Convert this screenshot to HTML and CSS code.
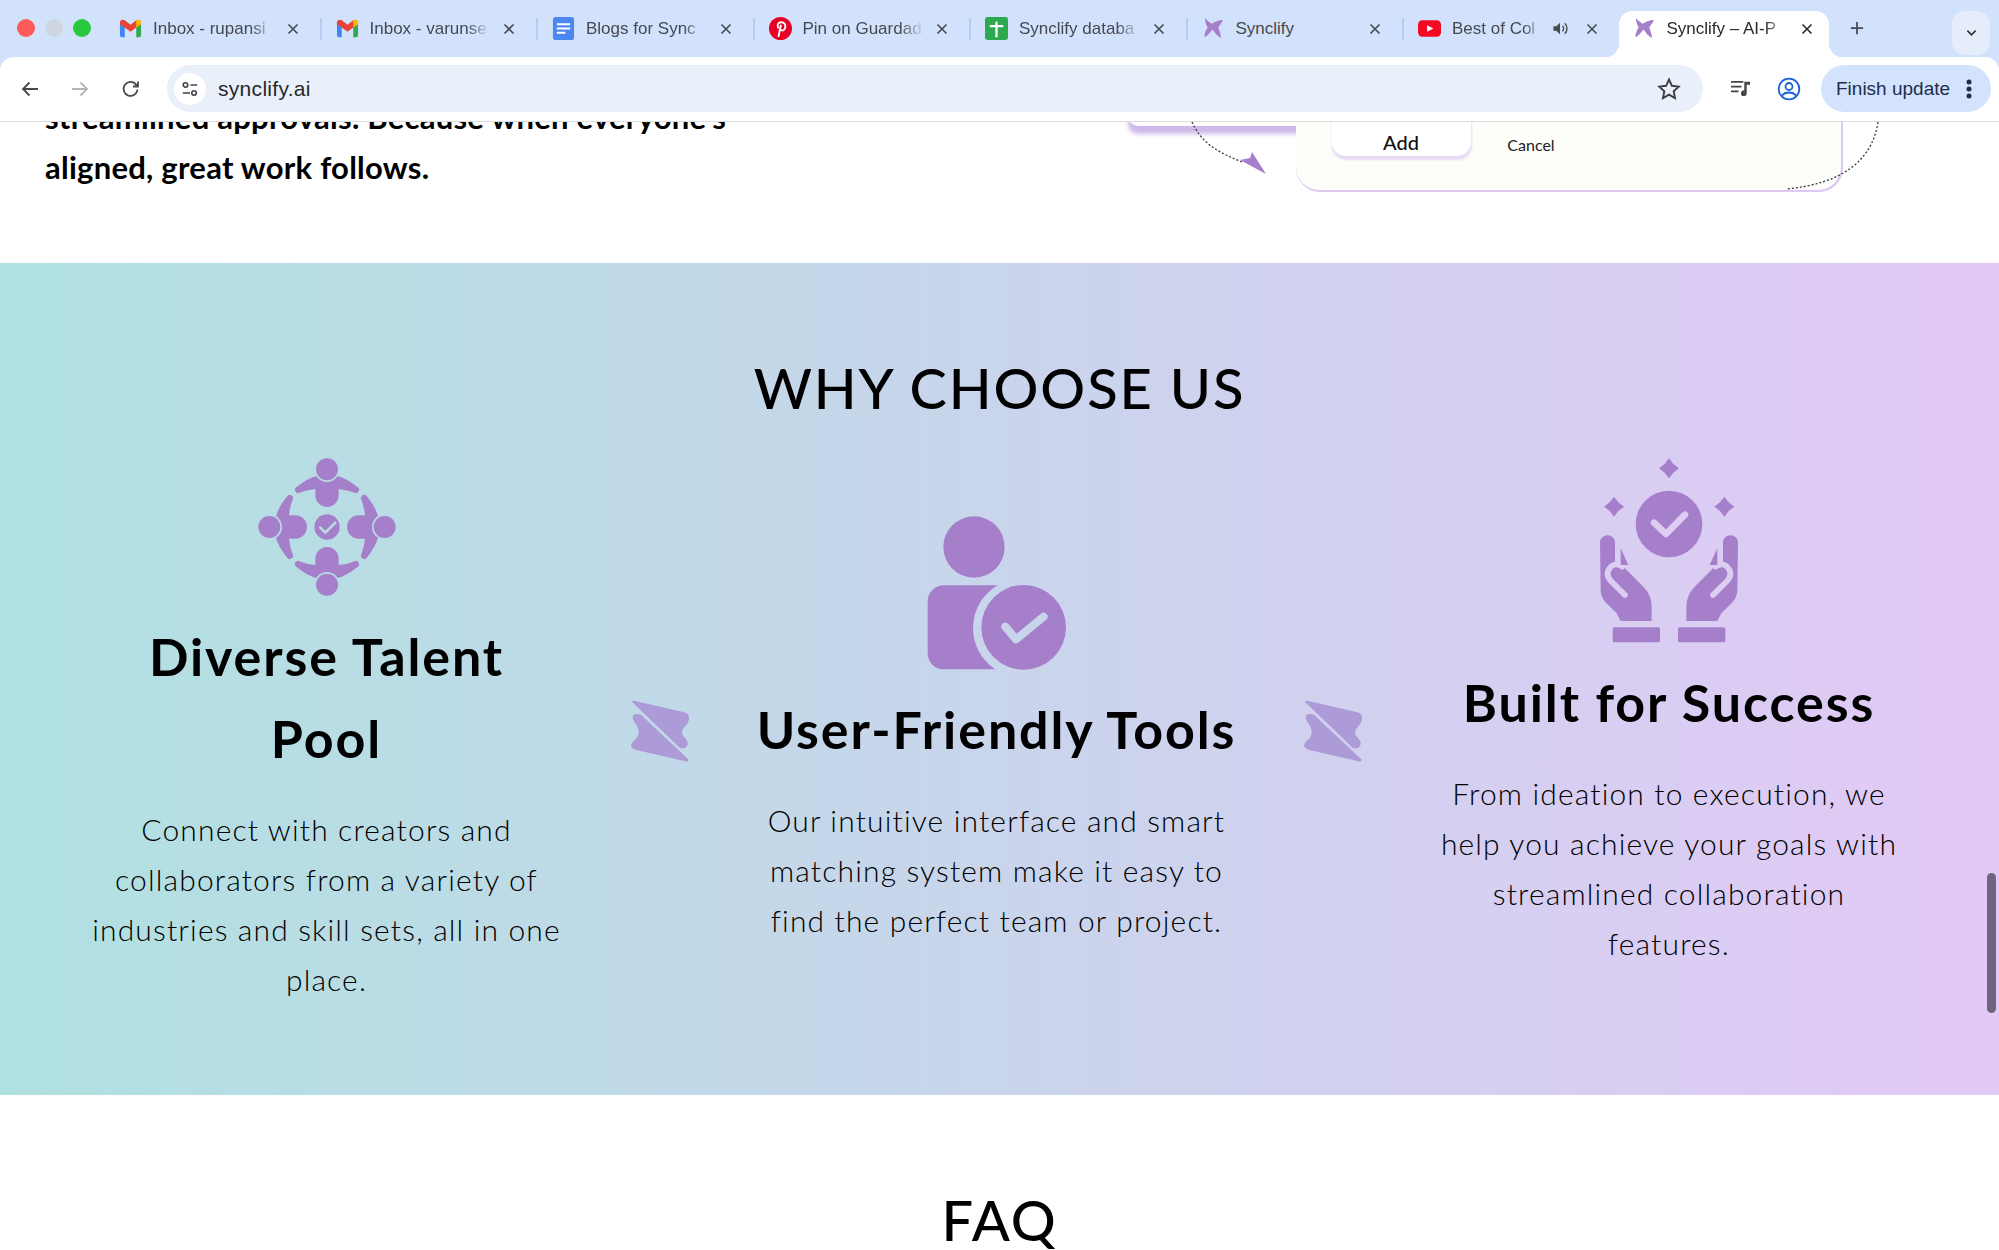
FILE: index.html
```html
<!DOCTYPE html>
<html lang="en">
<head>
<meta charset="utf-8">
<title>Synclify – AI-Powered Collaboration</title>
<link rel="stylesheet" href="styles.css">
</head>
<body>
<div class="app">
  <header class="browser">
    <div class="tabstrip">
      <div class="traffic"><i class="dot red"></i><i class="dot grey"></i><i class="dot green"></i></div>
      <div class="tab">
        <svg class="fav" viewBox="0 0 24 24"><path d="M1 21V6l5 3v12H3a2 2 0 0 1-2-2z" fill="#4285f4"/><path d="M23 21V6l-5 3v12h3a2 2 0 0 0 2-2z" fill="#34a853"/><path d="M1 7.500V5.500C1 3 4 2 6 3.500L12 8l6-4.500C20 2 23 3 23 5.500v2l-5 3.500-6 4.500L6 11z" fill="#ea4335"/><path d="M18 3.500C20 2 23 3 23 5.500v2l-5 3.500z" fill="#fbbc04"/></svg>
        <span class="title">Inbox - rupansi</span>
        <svg class="x" viewBox="0 0 12 12"><path d="M1.500 1.500l9 9M10.500 1.500l-9 9"/></svg>
      </div><i class="sep"></i>
      <div class="tab">
        <svg class="fav" viewBox="0 0 24 24"><path d="M1 21V6l5 3v12H3a2 2 0 0 1-2-2z" fill="#4285f4"/><path d="M23 21V6l-5 3v12h3a2 2 0 0 0 2-2z" fill="#34a853"/><path d="M1 7.500V5.500C1 3 4 2 6 3.500L12 8l6-4.500C20 2 23 3 23 5.500v2l-5 3.500-6 4.500L6 11z" fill="#ea4335"/><path d="M18 3.500C20 2 23 3 23 5.500v2l-5 3.500z" fill="#fbbc04"/></svg>
        <span class="title">Inbox - varunse</span>
        <svg class="x" viewBox="0 0 12 12"><path d="M1.500 1.500l9 9M10.500 1.500l-9 9"/></svg>
      </div><i class="sep"></i>
      <div class="tab">
        <svg class="fav" viewBox="0 0 24 24"><rect x="1" width="22" height="24" rx="3" fill="#4b87ef"/><path d="M5 7.500h14M5 12h14M5 16.500h9" stroke="#fff" stroke-width="2.200"/></svg>
        <span class="title">Blogs for Sync</span>
        <svg class="x" viewBox="0 0 12 12"><path d="M1.500 1.500l9 9M10.500 1.500l-9 9"/></svg>
      </div><i class="sep"></i>
      <div class="tab">
        <svg class="fav" viewBox="0 0 24 24"><circle cx="12" cy="12" r="12" fill="#e60023"/><path d="M9.500 11c-1.500-3 .5-5.500 3.300-5.500 3 0 4.700 2 4.200 5-.5 2.700-2.200 4-3.800 3.500-1-.3-1.600-1-1.700-2M12.300 8.800L10 20" fill="none" stroke="#fff" stroke-width="2" stroke-linecap="round"/></svg>
        <span class="title">Pin on Guardad</span>
        <svg class="x" viewBox="0 0 12 12"><path d="M1.500 1.500l9 9M10.500 1.500l-9 9"/></svg>
      </div><i class="sep"></i>
      <div class="tab">
        <svg class="fav" viewBox="0 0 24 24"><rect width="24" height="24" rx="2.500" fill="#2ea84f"/><path d="M5 9.500h14M12 5v16" stroke="#fff" stroke-width="2.400"/></svg>
        <span class="title">Synclify databa</span>
        <svg class="x" viewBox="0 0 12 12"><path d="M1.500 1.500l9 9M10.500 1.500l-9 9"/></svg>
      </div><i class="sep"></i>
      <div class="tab">
        <svg class="fav" viewBox="0 0 24 24"><path d="M3 1C5 4 8 5 10 7 13 5 17 3 22 3 20 7 18 9 17 11 18 14 19 16 20 22 17 20 14 18 11 13 8 17 6 19 3 21 2 18 4 14 6 11 4 8 3 4 3 1Z" fill="#a67fca"/></svg>
        <span class="title plain">Synclify</span>
        <svg class="x" viewBox="0 0 12 12"><path d="M1.500 1.500l9 9M10.500 1.500l-9 9"/></svg>
      </div><i class="sep"></i>
      <div class="tab">
        <svg class="fav" viewBox="0 0 24 24"><rect y="3.500" width="24" height="17" rx="4.500" fill="#f40b23"/><path d="M9.500 8.500l6.500 3.500-6.500 3.500z" fill="#fff"/></svg>
        <span class="title">Best of Col</span>
        <svg class="speaker" viewBox="0 0 18 18"><path d="M1.500 6.500h3l4-3.500v12l-4-3.500h-3z" fill="#4a4a4e"/><path d="M11 6a4 4 0 0 1 0 6M13.500 3.500a7.500 7.500 0 0 1 0 11" fill="none" stroke="#4a4a4e" stroke-width="1.500"/></svg>
        <svg class="x" viewBox="0 0 12 12"><path d="M1.500 1.500l9 9M10.500 1.500l-9 9"/></svg>
      </div>
      <div class="tab active">
        <svg class="fav" viewBox="0 0 24 24"><path d="M3 1C5 4 8 5 10 7 13 5 17 3 22 3 20 7 18 9 17 11 18 14 19 16 20 22 17 20 14 18 11 13 8 17 6 19 3 21 2 18 4 14 6 11 4 8 3 4 3 1Z" fill="#a67fca"/></svg>
        <span class="title">Synclify – AI-P</span>
        <svg class="x" viewBox="0 0 12 12"><path d="M1.500 1.500l9 9M10.500 1.500l-9 9"/></svg>
      </div>
      <svg class="plus" viewBox="0 0 16 16"><path d="M8 1v14M1 8h14"/></svg>
      <div class="tabmenu"><svg viewBox="0 0 12 8"><path d="M1.500 1.500L6 6l4.500-4.500"/></svg></div>
    </div>
    <div class="toolbar">
      <svg class="nav back" viewBox="0 0 20 20"><path d="M18 10H3M9.500 3.500L3 10l6.500 6.500"/></svg>
      <svg class="nav fwd" viewBox="0 0 20 20"><path d="M2 10h15M10.500 3.500L17 10l-6.500 6.500"/></svg>
      <svg class="nav reload" viewBox="0 0 20 20"><path d="M16.500 10.500a7 7 0 1 1-2-5.500L17 7.500M17 2.500v5h-5"/></svg>
      <div class="omnibox">
        <span class="siteinfo"><svg viewBox="0 0 20 20"><circle cx="5" cy="5.500" r="2.500"/><path d="M10.500 5.500H18M2 14.500h8"/><circle cx="14.500" cy="14.500" r="2.500"/></svg></span>
        <span class="url">synclify.ai</span>
        <svg class="star" viewBox="0 0 24 24"><path d="M12 2.500l2.900 6.300 6.800.8-5 4.700 1.300 6.800-6-3.400-6 3.400 1.300-6.800-5-4.700 6.800-.8z"/></svg>
      </div>
      <svg class="media" viewBox="0 0 22 20"><path d="M1 3h13M1 8h11M1 13h8" fill="none" stroke="#444" stroke-width="2"/><path d="M15 3h6v3h-3.500v9a3 3 0 1 1-2.500-3z" fill="#444"/></svg>
      <svg class="profile" viewBox="0 0 24 24"><circle cx="12" cy="12" r="10.300"/><circle cx="12" cy="9.500" r="3.500"/><path d="M5 18.500c2-2.500 4.500-3 7-3s5 .5 7 3"/></svg>
      <div class="update"><span>Finish update</span><svg viewBox="0 0 6 20"><circle cx="3" cy="3" r="2.500"/><circle cx="3" cy="10" r="2.500"/><circle cx="3" cy="17" r="2.500"/></svg></div>
    </div>
  </header>

  <main class="page">
    <section class="intro">
      <p class="intro-text">streamlined approvals. Because when everyone's<br>aligned, great work follows.</p>
      <svg class="illustration" viewBox="0 0 760 141">
        <rect x="0" y="-60" width="200" height="72" rx="10" class="soft"/>
        <rect x="0" y="-60" width="200" height="64" rx="10" fill="#fdfdfd"/>
        <path d="M64 0C74 22 90 30 114 40" class="dotted"/>
        <path d="M112 38L122 36 124 30 138 52z" fill="#a67fca"/>
        <rect x="168" y="-60" width="547" height="130" rx="24" fill="#dcc8f3"/>
        <rect x="168" y="-60" width="545" height="128" rx="23" fill="#fdfef9"/>
        <rect x="204" y="-40" width="140" height="78" rx="14" class="soft-btn"/>
        <rect x="204" y="-40" width="139" height="74" rx="14" fill="#fff"/>
        <text x="273" y="28" class="add">Add</text>
        <text x="403" y="29" class="cancel">Cancel</text>
        <path d="M750 0C744 40 712 62 658 67" class="dotted"/>
      </svg>
    </section>

    <section class="why">
      <h2 class="section-title">WHY CHOOSE US</h2>
      <div class="features">
        <article class="feature">
          <svg class="icon icon-team" viewBox="80 50 420 420">
            <g id="person">
              <path d="M195 143Q232 112 262 106H318Q348 112 385 143 390 153 378 159 350 148 325 146V165a35 35 0 0 1-70 0V146Q230 148 202 159 190 153 195 143Z" class="body"/>
              <circle cx="290" cy="87" r="38" class="gap"/>
              <circle cx="290" cy="87" r="33" class="body"/>
            </g>
            <use href="#person" transform="rotate(90 290 260)"/>
            <use href="#person" transform="rotate(180 290 260)"/>
            <use href="#person" transform="rotate(270 290 260)"/>
            <circle cx="290" cy="260" r="38" class="body"/>
            <path d="M270 262l15 15 30-30" class="tick tick-team"/>
          </svg>
          <h3 class="feature-title">Diverse Talent<br>Pool</h3>
          <p class="feature-text">Connect with creators and<br>collaborators from a variety of<br>industries and skill sets, all in one<br>place.</p>
        </article>
        <svg class="divider" viewBox="62 60 174 186"><path d="M65 66Q68 60 75 63L222 97Q236 100 236 115 236 128 225 138 205 158 225 175 238 190 228 200 220 208 208 203Z"/><path d="M70 105Q78 99 92 104L234 238Q235 248 225 244L78 210Q62 205 62 195 64 187 75 178 95 160 75 130 62 115 70 105Z"/></svg>
        <article class="feature">
          <svg class="icon icon-user" viewBox="80 48 420 462">
            <circle cx="221" cy="141" r="92" class="body"/>
            <path d="M130 256H292A148 148 0 0 0 285 508H130a48 48 0 0 1-48-48V304a48 48 0 0 1 48-48z" class="body"/>
            <circle cx="370" cy="382" r="127" class="body"/>
            <path d="M315 380l32 38 83-68" class="tick tick-user"/>
          </svg>
          <h3 class="feature-title">User-Friendly Tools</h3>
          <p class="feature-text">Our intuitive interface and smart<br>matching system make it easy to<br>find the perfect team or project.</p>
        </article>
        <svg class="divider" viewBox="62 60 174 186"><path d="M65 66Q68 60 75 63L222 97Q236 100 236 115 236 128 225 138 205 158 225 175 238 190 228 200 220 208 208 203Z"/><path d="M70 105Q78 99 92 104L234 238Q235 248 225 244L78 210Q62 205 62 195 64 187 75 178 95 160 75 130 62 115 70 105Z"/></svg>
        <article class="feature feature-last">
          <svg class="icon icon-hands" viewBox="57 24 420 555">
            <path d="M267 25l13 17 17 13-17 13-13 17-13-17-17-13 17-13zM102 140l13 17 17 13-17 13-13 17-13-17-17-13 17-13zM433 140l13 17 17 13-17 13-13 17-13-17-17-13 17-13z" class="body"/>
            <circle cx="267" cy="222" r="100" class="body"/>
            <path d="M222 218l36 34 57-58" class="tick tick-hands"/>
            <g id="hand">
              <path d="M60 278a22.500 22.500 0 0 1 45 0V345h20l65 65q25 25 25 60v43H122l-12-23-35-35q-13-15-13-35z" class="body"/>
              <path d="M135 435L92 392Q72 370 95 348q15-10 32 2" class="tick tick-hand"/>
              <path d="M122 295l23 50h-23z" class="body"/>
              <rect x="98" y="532" width="142" height="45" rx="5" class="body"/>
            </g>
            <use href="#hand" transform="translate(534 0) scale(-1 1)"/>
          </svg>
          <h3 class="feature-title">Built for Success</h3>
          <p class="feature-text">From ideation to execution, we<br>help you achieve your goals with<br>streamlined collaboration<br>features.</p>
        </article>
      </div>
    </section>

    <section class="faq">
      <h2 class="section-title">FAQ</h2>
    </section>
    <div class="scrollbar"></div>
  </main>
</div>
</body>
</html>
```

FILE: styles.css
```css
* { box-sizing: border-box; }
html, body { margin: 0; height: 100%; background: #fff; overflow: hidden; }
.app { display: flex; flex-direction: column; width: 1999px; height: 1250px; overflow: hidden; }

/* browser chrome */
.browser { flex: none; background: #d2e2fc; position: relative; z-index: 2; font-family: "Liberation Sans", Arial, sans-serif; }
.tabstrip { display: flex; align-items: flex-end; height: 57px; padding-left: 17px; }
.traffic { display: flex; gap: 10px; width: 88px; align-self: flex-start; padding-top: 19px; }
.dot { width: 18px; height: 18px; border-radius: 50%; }
.red { background: #fc5b57; }
.grey { background: #ced6e2; }
.green { background: #29c93f; }
.tab { display: flex; align-items: center; flex: none; width: 214.500px; height: 46px; padding: 0 21px 11px 14px; color: #46494f; font-size: 17px; position: relative; }
.sep { flex: none; width: 2px; height: 22px; margin: 0 0 17px; background: #b4cdf3; }
.fav { flex: none; width: 23px; height: 23px; margin-right: 11px; }
.title { flex: 1; min-width: 0; white-space: nowrap; -webkit-mask-image: linear-gradient(90deg, #000 80%, transparent 100%); mask-image: linear-gradient(90deg, #000 80%, transparent 100%); }
.plain { -webkit-mask-image: none; mask-image: none; }
.x { flex: none; width: 12px; height: 12px; margin-left: 12px; fill: none; stroke: #46494f; stroke-width: 1.600; }
.speaker { flex: none; width: 17px; height: 17px; margin-left: 10px; margin-right: 8px; }
.speaker + .x { margin-left: 9px; }
.active { width: 210px; background: #fff; border-radius: 14px 14px 0 0; color: #27292d; padding: 0 16px 11px 14px; }
.active .x { stroke: #27292d; }
.active::before, .active::after { content: ""; position: absolute; bottom: 0; width: 14px; height: 14px; }
.active::before { left: -14px; background: radial-gradient(circle at 0 0, #d2e2fc 14px, #fff 14.500px); }
.active::after { right: -14px; background: radial-gradient(circle at 100% 0, #d2e2fc 14px, #fff 14.500px); }
.plus { flex: none; width: 14px; height: 14px; margin: 0 0 22px 21px; fill: none; stroke: #46494f; stroke-width: 2; }
.tabmenu { display: flex; align-items: center; justify-content: center; width: 38px; height: 44px; margin: 0 9px 2px auto; background: #e5edfb; border-radius: 13px; }
.tabmenu svg { width: 11px; height: 8px; fill: none; stroke: #2d2f33; stroke-width: 1.800; }

.toolbar { display: flex; align-items: center; height: 65px; padding-bottom: 1px; background: #fff; border-bottom: 1px solid #dcdde0; border-radius: 14px 14px 0 0; }
.nav { flex: none; width: 20px; height: 20px; fill: none; stroke: #46494f; stroke-width: 1.800; }
.back { margin-left: 20px; }
.fwd { margin-left: 30px; stroke: #b3b5b8; }
.reload { margin-left: 31px; }
.omnibox { display: flex; align-items: center; width: 1536px; height: 47px; margin-left: 26px; padding: 0 22px 0 7px; background: #e9f0f9; border-radius: 24px; }
.siteinfo { display: flex; align-items: center; justify-content: center; flex: none; width: 32px; height: 32px; background: #fff; border-radius: 50%; }
.siteinfo svg { width: 18px; height: 18px; fill: none; stroke: #3f4145; stroke-width: 1.800; }
.url { flex: 1; margin-left: 12px; font-size: 21px; letter-spacing: .3px; color: #26282c; }
.star { flex: none; width: 24px; height: 24px; fill: none; stroke: #3c3e42; stroke-width: 1.900; }
.media { flex: none; width: 21px; height: 19px; margin-left: 27px; }
.profile { flex: none; width: 24px; height: 24px; margin-left: 26px; fill: none; stroke: #1a62d6; stroke-width: 1.800; }
.update { display: flex; align-items: center; justify-content: space-between; width: 170px; height: 47px; margin-left: 20px; padding: 0 19px 0 15px; background: #d3e3fd; border-radius: 24px; color: #1e2c4c; font-size: 19px; }
.update svg { flex: none; width: 6px; height: 20px; fill: #1e2c4c; }

/* page */
.page { flex: 1; min-height: 0; position: relative; overflow: hidden; background: #fff; font-family: Lato, "Liberation Sans", sans-serif; color: #000; }
.intro { display: flex; justify-content: space-between; height: 141px; }
.intro-text { margin: -30px 0 0 45px; font-size: 31px; line-height: 50px; font-weight: 700; letter-spacing: .25px; white-space: nowrap; }
.illustration { flex: none; width: 760px; height: 141px; margin-right: 111px; overflow: visible; }
.soft { fill: #cdb9ea; filter: blur(2px); }
.soft-btn { fill: #e6daf6; filter: blur(1px); }
.dotted { fill: none; stroke: #3d3a44; stroke-width: 1.300; stroke-dasharray: 2 2; }
.add { font-size: 20px; font-weight: 500; text-anchor: middle; fill: #111; }
.cancel { font-size: 16px; font-weight: 400; text-anchor: middle; fill: #222; }

.why { height: 832px; padding-top: 96px; background: linear-gradient(90deg, #b0e1e1, #e2c9f6); }
.section-title { margin: 0; font-size: 56px; line-height: 58px; font-weight: 500; text-align: center; white-space: nowrap; letter-spacing: 1.900px; }
.features { display: grid; grid-template-columns: 601px 58px 607px 58px 606px; column-gap: 4px; align-items: center; margin: 40px 0 0 26px; }
.feature { display: flex; flex-direction: column; align-items: center; text-align: center; }
.feature-last { margin-bottom: 35px; }
.icon { display: block; flex: none; }
.icon-team { width: 140px; height: 140px; }
.icon-user { width: 140px; height: 154px; }
.icon-hands { width: 140px; height: 185px; }
.feature-title { margin: 18px 0 25px; font-size: 52px; line-height: 82px; font-weight: 700; letter-spacing: 1.900px; white-space: nowrap; }
.feature-text { margin: 0; font-size: 30px; line-height: 50px; font-weight: 300; letter-spacing: 1.150px; white-space: nowrap; }
.body { fill: #a67fca; }
.gap { fill: #b8dce4; }
.tick { fill: none; stroke-linecap: round; stroke-linejoin: round; }
.tick-team { stroke: #b8dce4; stroke-width: 8; }
.tick-user { stroke: #c7d4ec; stroke-width: 24; }
.tick-hands { stroke: #dccdf2; stroke-width: 20; }
.tick-hand { stroke: #dccdf2; stroke-width: 17; }
.divider { display: block; width: 58px; height: 62px; fill: #ad9bd8; }

.faq { padding-top: 96px; height: 180px; }
.scrollbar { position: absolute; left: 1987px; top: 751px; width: 9px; height: 140px; border-radius: 5px; background: #6f6480; }
```
